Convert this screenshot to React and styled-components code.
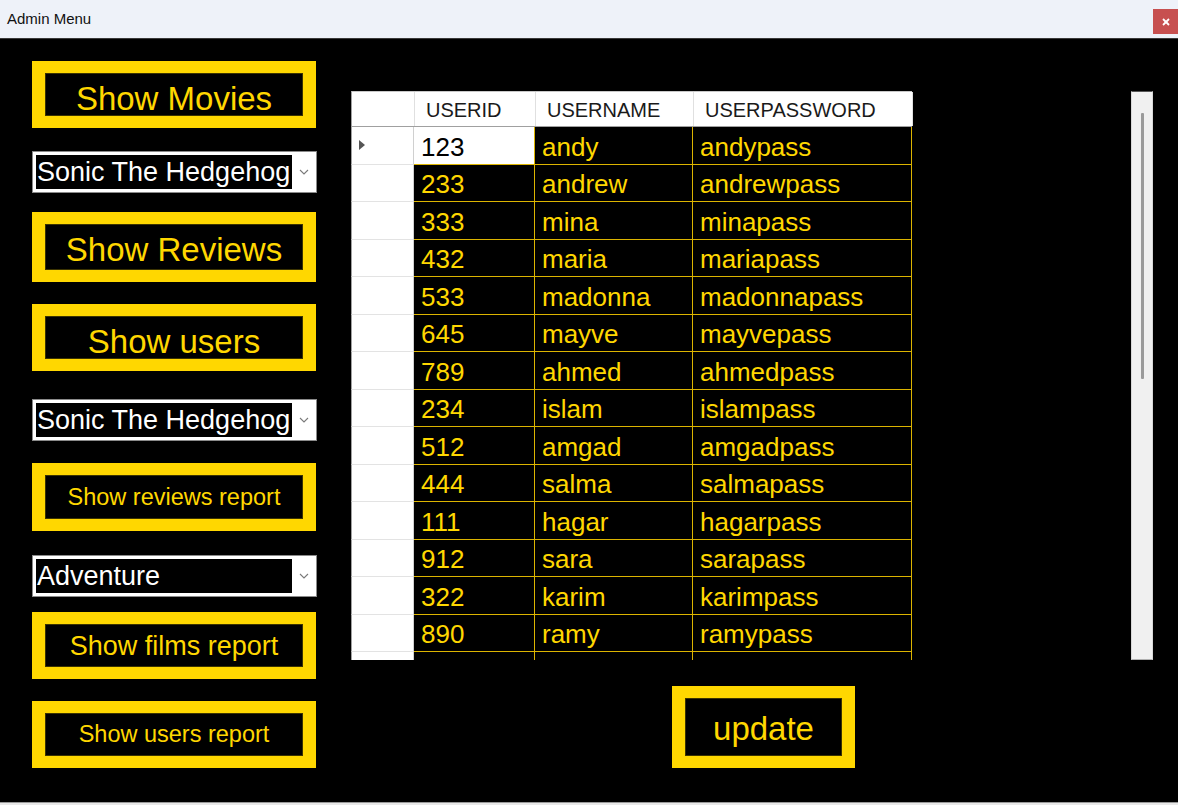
import React from 'react';
import styled, { createGlobalStyle } from 'styled-components';

const GlobalStyle = createGlobalStyle`
  * {
    margin: 0;
    padding: 0;
    box-sizing: border-box;
  }
  body {
    font-family: 'Liberation Sans', Arial, sans-serif;
    background: #000;
    overflow: hidden;
  }
`;

const YELLOW = '#ffd700';
const LINE = '#dcb400';

const users = [
  ['123', 'andy', 'andypass'],
  ['233', 'andrew', 'andrewpass'],
  ['333', 'mina', 'minapass'],
  ['432', 'maria', 'mariapass'],
  ['533', 'madonna', 'madonnapass'],
  ['645', 'mayve', 'mayvepass'],
  ['789', 'ahmed', 'ahmedpass'],
  ['234', 'islam', 'islampass'],
  ['512', 'amgad', 'amgadpass'],
  ['444', 'salma', 'salmapass'],
  ['111', 'hagar', 'hagarpass'],
  ['912', 'sara', 'sarapass'],
  ['322', 'karim', 'karimpass'],
  ['890', 'ramy', 'ramypass'],
  ['', '', ''],
];

const Chevron = () => (
  <svg width="10" height="6" viewBox="0 0 10 6">
    <polyline points="1,1 5,5 9,1" fill="none" stroke="#7a7a7a" strokeWidth="1.1" />
  </svg>
);

const Combo = ({ value, top }) => (
  <ComboBox $top={top}>
    <ComboValue>{value}</ComboValue>
    <ComboArrow><Chevron /></ComboArrow>
  </ComboBox>
);

const YellowButton = ({ children, top, h, size, shift, w }) => (
  <ButtonFrame $top={top} $h={h} $w={w}>
    <ButtonInner $size={size} $shift={shift}>{children}</ButtonInner>
  </ButtonFrame>
);

const App = () => {
  return (
    <>
      <GlobalStyle />
      <Window>
        <TitleBar>
          <Title>Admin Menu</Title>
          <CloseButton>
            <svg width="10" height="10" viewBox="0 0 10 10">
              <line x1="2" y1="2" x2="8" y2="8" stroke="#fff" strokeWidth="1.8" />
              <line x1="8" y1="2" x2="2" y2="8" stroke="#fff" strokeWidth="1.8" />
            </svg>
          </CloseButton>
        </TitleBar>

        <Main>
          <LeftColumn>
            <YellowButton top={22} h={67} size={33} shift={8}>Show Movies</YellowButton>
            <Combo value="Sonic The Hedgehog" top={23} />
            <YellowButton top={19} h={70} size={33} shift={5}>Show Reviews</YellowButton>
            <YellowButton top={22} h={67} size={33} shift={8}>Show users</YellowButton>
            <Combo value="Sonic The Hedgehog" top={28} />
            <YellowButton top={22} h={68} size={23.5} shift={1}>Show reviews report</YellowButton>
            <Combo value="Adventure" top={24} />
            <YellowButton top={15} h={67} size={27} shift={1}>Show films report</YellowButton>
            <YellowButton top={22} h={67} size={23.5} shift={1}>Show users report</YellowButton>
          </LeftColumn>

          <CenterColumn>
            <Grid>
              <HeaderRow>
                <HeaderCell />
                <HeaderCell>USERID</HeaderCell>
                <HeaderCell>USERNAME</HeaderCell>
                <HeaderCell>USERPASSWORD</HeaderCell>
              </HeaderRow>
              <Body>
                {users.map((row, i) => (
                  <Row key={i}>
                    <RowHeader>
                      {i === 0 && (
                        <svg width="7" height="10" viewBox="0 0 7 10">
                          <polygon points="0,0 6,5 0,10" fill="#555" />
                        </svg>
                      )}
                    </RowHeader>
                    {row.map((v, j) => (
                      <Cell key={j} $selected={i === 0 && j === 0}>{v}</Cell>
                    ))}
                  </Row>
                ))}
              </Body>
            </Grid>
            <UpdateRow>
              <YellowButton h={82} w={183} size={33} shift={2}>update</YellowButton>
            </UpdateRow>
          </CenterColumn>

          <ScrollBar>
            <ScrollThumb />
          </ScrollBar>
        </Main>
        <BottomStrip />
      </Window>
    </>
  );
};

const Window = styled.div`
  width: 1178px;
  height: 805px;
  display: flex;
  flex-direction: column;
  background: #000;
`;

const TitleBar = styled.div`
  height: 39px;
  flex-shrink: 0;
  background: #eef2f9;
  border-bottom: 1px solid #3a3a3a;
  display: flex;
  align-items: flex-start;
  justify-content: space-between;
`;

const Title = styled.div`
  font-size: 15px;
  color: #111;
  padding: 10px 0 0 7px;
`;

const CloseButton = styled.div`
  margin-top: 9px;
  width: 25px;
  height: 25px;
  background: #c75050;
  display: flex;
  align-items: center;
  justify-content: center;
`;

const Main = styled.div`
  flex: 1;
  display: flex;
  align-items: flex-start;
  background: #000;
`;

const LeftColumn = styled.div`
  display: flex;
  flex-direction: column;
  padding-left: 32px;
  width: 316px;
  flex-shrink: 0;
`;

const ButtonFrame = styled.div`
  margin-top: ${p => p.$top || 0}px;
  width: ${p => p.$w || 284}px;
  height: ${p => p.$h}px;
  background: ${YELLOW};
  padding: 12px 13px;
  display: flex;
`;

const ButtonInner = styled.div`
  flex: 1;
  background: #000;
  border: 1px solid #3b3300;
  color: ${YELLOW};
  font-size: ${p => p.$size}px;
  line-height: 1;
  display: flex;
  align-items: center;
  justify-content: center;
  padding-top: ${p => p.$shift}px;
  white-space: nowrap;
  overflow: hidden;
`;

const ComboBox = styled.div`
  margin-top: ${p => p.$top}px;
  width: 285px;
  height: 42px;
  background: #fff;
  border: 1px solid #8a8a8a;
  padding: 3px;
  display: flex;
  align-items: stretch;
`;

const ComboValue = styled.div`
  width: 256px;
  background: #000;
  color: #fff;
  font-size: 27px;
  line-height: 34px;
  white-space: nowrap;
  overflow: hidden;
  padding-left: 1px;
`;

const ComboArrow = styled.div`
  flex: 1;
  display: flex;
  align-items: center;
  justify-content: center;
  padding-left: 2px;
`;

const CenterColumn = styled.div`
  margin-left: 35px;
  padding-top: 52px;
  display: flex;
  flex-direction: column;
`;

const Grid = styled.div`
  width: 561px;
  display: flex;
  flex-direction: column;
`;

const columns = '63px 121px 158px 219px';

const HeaderRow = styled.div`
  display: grid;
  grid-template-columns: ${columns};
  height: 36px;
  background: #fff;
  border-bottom: 1px solid #a0a0a0;
  border-left: 1px solid #a0a0a0;
  border-top: 1px solid #c8c8c8;
`;

const HeaderCell = styled.div`
  border-right: 1px solid #e0e0e0;
  font-size: 20px;
  color: #1a1a1a;
  padding: 2px 0 0 11px;
  display: flex;
  align-items: center;
`;

const Body = styled.div`
  height: 533px;
  overflow: hidden;
`;

const Row = styled.div`
  display: grid;
  grid-template-columns: ${columns};
  height: 37.5px;
`;

const RowHeader = styled.div`
  background: #fff;
  border-left: 1px solid #a0a0a0;
  border-right: 1px solid #d0d0d0;
  border-bottom: 1px solid #e3e3e3;
  display: flex;
  align-items: center;
  padding-left: 7px;
`;

const Cell = styled.div`
  background: ${p => (p.$selected ? '#fff' : '#000')};
  color: ${p => (p.$selected ? '#000' : YELLOW)};
  border-right: 1px solid ${LINE};
  border-bottom: 1px solid ${LINE};
  font-size: 26px;
  padding: 4px 0 0 7px;
  display: flex;
  align-items: center;
  white-space: nowrap;
  overflow: hidden;
`;

const UpdateRow = styled.div`
  margin-top: 26px;
  padding-left: 321px;
  display: flex;
`;

const ScrollBar = styled.div`
  margin-left: 219px;
  margin-top: 52px;
  width: 22px;
  height: 569px;
  background: #f0f0f0;
  border-top: 1px solid #555;
  border-left: 1px solid #d8d8d8;
  border-right: 1px solid #d8d8d8;
  border-bottom: 1px solid #b0b0b0;
  padding-top: 21px;
  display: flex;
  justify-content: center;
`;

const ScrollThumb = styled.div`
  width: 3px;
  height: 266px;
  background: #9a9a9a;
  border-radius: 1px;
`;

const BottomStrip = styled.div`
  height: 3px;
  flex-shrink: 0;
  background: #e8e8e8;
  border-top: 1px solid #9a9a9a;
`;

export default App;
